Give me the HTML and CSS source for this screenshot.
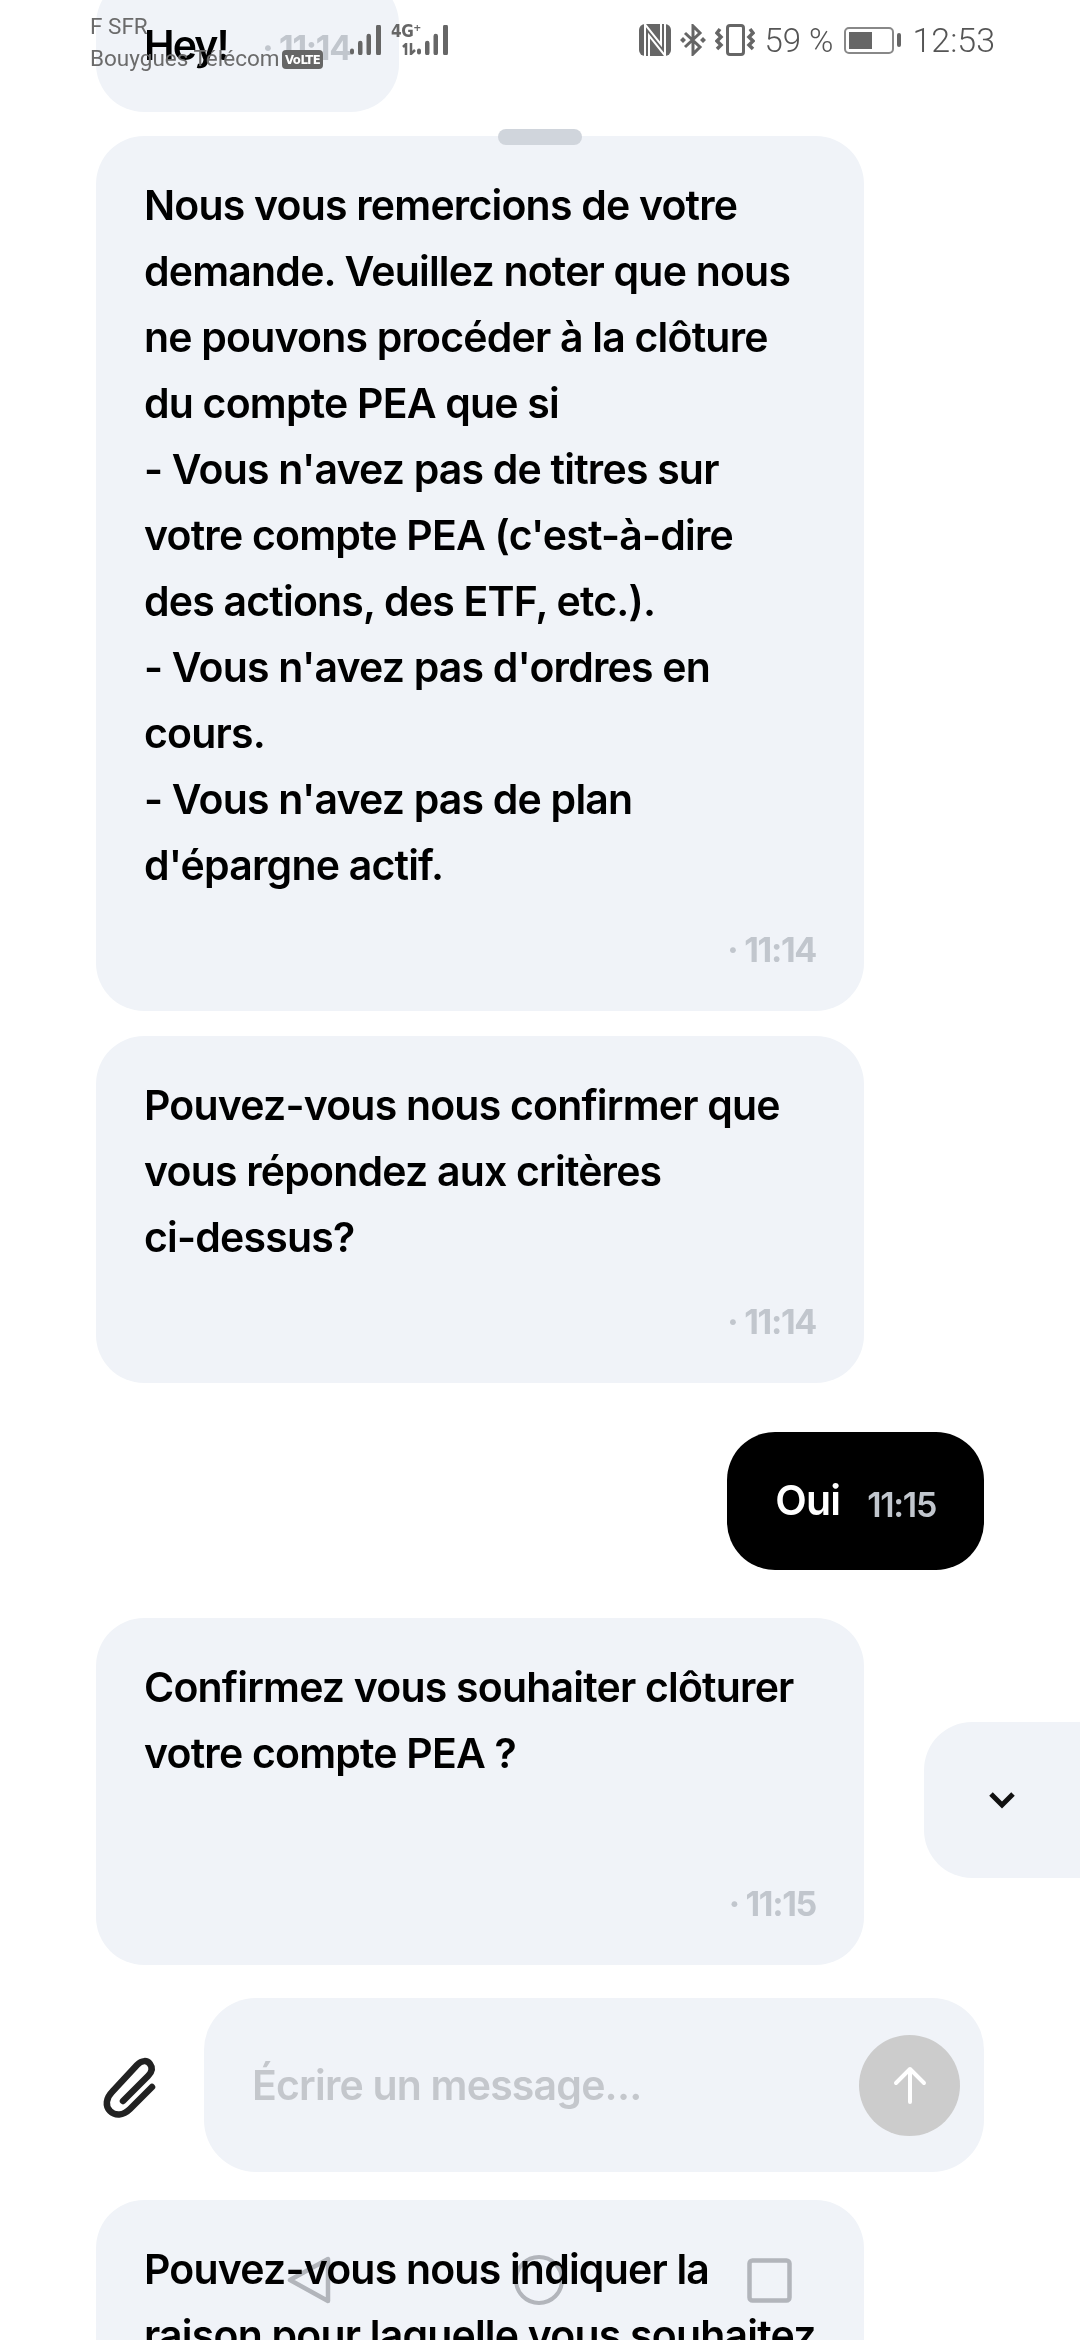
FILE: index.html
```html
<!DOCTYPE html>
<html>
<head>
    <title>Chat</title>
    <link rel="stylesheet" href="styles.css">
</head>
<body>
    <div class="phone">
        <div class="messages">
            <div class="bubble bubble-short">
                <span class="msg-text hey">Hey!</span>
                <span class="time-inline">· 11:14</span>
            </div>
            <div class="bubble">
                <div class="msg-text">Nous vous remercions de votre<br>demande. Veuillez noter que nous<br>ne pouvons procéder à la clôture<br>du compte PEA que si<br>- Vous n'avez pas de titres sur<br>votre compte PEA (c'est-à-dire<br>des actions, des ETF, etc.).<br>- Vous n'avez pas d'ordres en<br>cours.<br>- Vous n'avez pas de plan<br>d'épargne actif.</div>
                <div class="time">· 11:14</div>
            </div>
            <div class="bubble">
                <div class="msg-text">Pouvez-vous nous confirmer que<br>vous répondez aux critères<br>ci-dessus?</div>
                <div class="time">· 11:14</div>
            </div>
            <div class="bubble-me">
                <span class="me-text">Oui</span>
                <span class="me-time">11:15</span>
            </div>
            <div class="bubble bubble-confirm">
                <div class="msg-text">Confirmez vous souhaiter clôturer<br>votre compte PEA ?</div>
                <div class="time">· 11:15</div>
            </div>
            <div class="composer">
                <svg class="clip" width="90" height="90" viewBox="0 0 90 90">
                    <path d="M62 47 L40 69 C33 76 25 76 20 71 C15 66 16 58 22 52 L47 25 C52 20 57 20 60 24 C63 28 62 32 58 36 L33 61" fill="none" stroke="#222" stroke-width="6.5" stroke-linecap="round"/>
                </svg>
                <div class="input">
                    <span class="placeholder">Écrire un message...</span>
                    <div class="send">
                        <svg width="34" height="38" viewBox="0 0 34 38">
                            <path d="M17 36 V3 M3 17 L17 3 L31 17" fill="none" stroke="#fff" stroke-width="4" stroke-linecap="round" stroke-linejoin="round"/>
                        </svg>
                    </div>
                </div>
            </div>
            <div class="bubble">
                <div class="msg-text">Pouvez-vous nous indiquer la<br>raison pour laquelle vous souhaitez</div>
            </div>
        </div>

        <div class="handle"></div>

        <div class="scroll-down">
            <svg width="28" height="18" viewBox="0 0 28 18">
                <path d="M3 3 L14 14 L25 3" fill="none" stroke="#111" stroke-width="5"/>
            </svg>
        </div>

        <div class="statusbar">
            <div class="status-left">
                <div class="carriers">
                    <span>F SFR</span>
                    <span class="carrier-line">Bouygues Télécom <b class="volte">VoLTE</b></span>
                </div>
                <svg class="signal" width="33" height="30" viewBox="0 0 33 30">
                    <path d="M0 25.5a2 2 0 0 1 4 0v2a2 2 0 0 1-4 0zM8 18a2.200 2.200 0 0 1 4.500 0v10a2.200 2.200 0 0 1-4.500 0zM16.500 11a2.200 2.200 0 0 1 4.500 0v17a2.200 2.200 0 0 1-4.500 0zM26 2a2.500 2.500 0 0 1 5 0v26a2.500 2.500 0 0 1-5 0z" fill="#666"/>
                </svg>
                <div class="net">
                    <div class="net-col">
                        <span class="net-label">4G⁺</span>
                        <svg width="14" height="12" viewBox="0 0 14 12">
                            <path d="M1 4 L4 1 V12 M9 0 V11 L13 7" fill="none" stroke="#666" stroke-width="2.500"/>
                        </svg>
                    </div>
                    <svg class="signal" width="33" height="30" viewBox="0 0 33 30">
                        <path d="M0 25.5a2 2 0 0 1 4 0v2a2 2 0 0 1-4 0zM8 18a2.200 2.200 0 0 1 4.500 0v10a2.200 2.200 0 0 1-4.500 0zM16.500 11a2.200 2.200 0 0 1 4.500 0v17a2.200 2.200 0 0 1-4.500 0zM26 2a2.500 2.500 0 0 1 5 0v26a2.500 2.500 0 0 1-5 0z" fill="#666"/>
                    </svg>
                </div>
            </div>
            <div class="status-right">
                <svg width="32" height="32" viewBox="0 0 32 32">
                    <rect width="32" height="32" rx="6" fill="#666"/>
                    <path d="M8 32 V6 L24 26 V0" fill="none" stroke="#fff" stroke-width="6"/>
                    <path d="M8 32 V6 L24 26 V0" fill="none" stroke="#666" stroke-width="2"/>
                </svg>
                <svg width="26" height="32" viewBox="0 0 26 32">
                    <path d="M5 9 L20 23 L13 30 V2 L20 9 L5 23" fill="none" stroke="#666" stroke-width="3"/>
                    <path d="M0 16 L3 13 L6 16 L3 19 Z M20 16 L23 13 L26 16 L23 19 Z" fill="#666"/>
                </svg>
                <svg width="40" height="32" viewBox="0 0 40 32">
                    <rect x="12.500" y="1.500" width="16" height="29" rx="2.500" fill="none" stroke="#666" stroke-width="3"/>
                    <path d="M5 5 L2 9 L6 13 L2 17 L6 21 L2 25 M35 5 L38 9 L34 13 L38 17 L34 21 L38 25" fill="none" stroke="#666" stroke-width="3.500"/>
                </svg>
                <span class="pct">59 %</span>
                <div class="battery">
                    <div class="battery-body"><div class="battery-fill"></div></div>
                    <div class="battery-cap"></div>
                </div>
                <span class="clock">12:53</span>
            </div>
        </div>

        <div class="navbar">
            <svg width="44" height="48" viewBox="0 0 44 48">
                <path d="M41 3 V45 L3 24 Z" fill="none" stroke="#bdbec1" stroke-width="4.500" stroke-linejoin="round"/>
            </svg>
            <svg width="50" height="50" viewBox="0 0 50 50">
                <circle cx="25" cy="25" r="23" fill="none" stroke="#bdbec1" stroke-width="4"/>
            </svg>
            <svg width="45" height="45" viewBox="0 0 45 45">
                <rect x="2.500" y="2.500" width="40" height="40" rx="3" fill="none" stroke="#bdbec1" stroke-width="4.500"/>
            </svg>
        </div>
    </div>
</body>
</html>
```

FILE: styles.css
```css
body {
    margin: 0;
    background: #fff;
    font-family: Inter, sans-serif;
}

.phone {
    position: relative;
    width: 1080px;
    height: 2340px;
    overflow: hidden;
}

.messages {
    display: flex;
    flex-direction: column;
    margin-top: -24px;
    padding: 0 96px;
}

.bubble {
    box-sizing: border-box;
    width: 768px;
    padding: 36px 48px 28px;
    margin-bottom: 25px;
    background: #f0f3f8;
    border-radius: 48px;
    flex-shrink: 0;
}

.bubble-short {
    width: 303px;
    padding-bottom: 34px;
    margin-bottom: 24px;
    white-space: nowrap;
}

.bubble-confirm {
    margin-bottom: 33px;
}

.bubble-confirm .msg-text {
    min-height: 198px;
}

.msg-text {
    font-size: 41px;
    font-weight: 600;
    line-height: 66px;
    letter-spacing: -0.8px;
    white-space: nowrap;
    color: #000;
}

.hey {
    letter-spacing: -1.9px;
}

.time {
    margin-top: 19px;
    font-size: 34px;
    font-weight: 700;
    line-height: 66px;
    letter-spacing: -1.3px;
    text-align: right;
    color: #c1c6cd;
}

.time-inline {
    margin-left: 30px;
    font-size: 34px;
    font-weight: 700;
    letter-spacing: -1.3px;
    color: #c1c6cd;
}

.bubble-me {
    display: flex;
    align-items: center;
    gap: 27px;
    align-self: flex-end;
    height: 138px;
    box-sizing: border-box;
    margin: 24px 0 48px;
    padding: 0 48px;
    background: #000;
    border-radius: 48px;
}

.me-text {
    font-size: 41px;
    font-weight: 600;
    letter-spacing: -0.8px;
    margin-top: -2px;
    color: #fff;
}

.me-time {
    margin-top: 6px;
    font-size: 34px;
    font-weight: 600;
    letter-spacing: -1.3px;
    color: #c1c6cd;
}

.composer {
    display: flex;
    align-items: center;
    margin-bottom: 28px;
    flex-shrink: 0;
}

.clip {
    margin: 0 24px 0 -6px;
    flex-shrink: 0;
}

.input {
    display: flex;
    align-items: center;
    justify-content: space-between;
    box-sizing: border-box;
    width: 780px;
    height: 174px;
    padding: 0 24px 0 48px;
    background: #f0f3f8;
    border-radius: 52px;
}

.placeholder {
    font-size: 41px;
    font-weight: 600;
    letter-spacing: -0.8px;
    color: #c4c7cc;
}

.send {
    display: flex;
    align-items: center;
    justify-content: center;
    width: 101px;
    height: 101px;
    background: #ccc;
    border-radius: 50%;
}

.handle {
    position: absolute;
    left: 498px;
    top: 129px;
    width: 84px;
    height: 16px;
    background: #d0d5dc;
    border-radius: 8px;
}

.scroll-down {
    position: absolute;
    left: 924px;
    top: 1722px;
    display: flex;
    align-items: center;
    justify-content: center;
    box-sizing: border-box;
    width: 156px;
    height: 156px;
    background: #f0f3f8;
    border-radius: 48px 0 0 48px;
}

.statusbar {
    position: absolute;
    left: 0;
    top: 0;
    right: 0;
    display: flex;
    justify-content: space-between;
    padding: 10px 85px 0 90px;
    font-family: Roboto, sans-serif;
    color: #666;
}

.status-left {
    display: flex;
    align-items: flex-start;
}

.carriers {
    display: flex;
    flex-direction: column;
    width: 260px;
    font-size: 22.5px;
    font-weight: 400;
    line-height: 32px;
    white-space: nowrap;
    color: #6b6b6b;
}

.carrier-line {
    display: flex;
    align-items: center;
    white-space: pre;
}

.volte {
    display: flex;
    align-items: center;
    justify-content: center;
    width: 41px;
    height: 19px;
    margin: 3px 0 0 -3px;
    font-family: "DejaVu Sans", sans-serif;
    font-stretch: condensed;
    font-size: 13px;
    font-weight: 700;
    letter-spacing: -0.5px;
    color: #fff;
    background: #666;
    border-radius: 4px;
}

.signal {
    margin-top: 15px;
}

.net {
    display: flex;
    margin: 0 0 0 8px;
}

.net-col {
    display: flex;
    flex-direction: column;
    align-items: flex-end;
    width: 25px;
    margin: 13px 1px 0 0;
}

.net-label {
    align-self: flex-start;
    height: 20px;
    font-family: "DejaVu Sans", sans-serif;
    font-stretch: condensed;
    font-size: 17px;
    font-weight: 700;
    letter-spacing: -0.5px;
    line-height: 17px;
    white-space: nowrap;
}

.status-right {
    display: flex;
    align-items: center;
    gap: 9px;
    height: 60px;
}

.pct {
    font-size: 33px;
    font-weight: 300;
    color: #555;
}

.battery {
    display: flex;
    align-items: center;
    gap: 3px;
    margin-left: 2px;
}

.battery-body {
    box-sizing: border-box;
    width: 50px;
    height: 27px;
    padding: 3px;
    border: 2px solid #888;
    border-radius: 5px;
}

.battery-fill {
    width: 56%;
    height: 100%;
    background: #666;
}

.battery-cap {
    width: 4px;
    height: 14px;
    background: #666;
    border-radius: 2px;
}

.clock {
    margin-left: 2px;
    font-size: 34px;
    font-weight: 300;
    color: #555;
}

.navbar {
    position: absolute;
    left: 287px;
    top: 2255px;
    display: flex;
    align-items: center;
    gap: 183px;
    mix-blend-mode: multiply;
}
```
